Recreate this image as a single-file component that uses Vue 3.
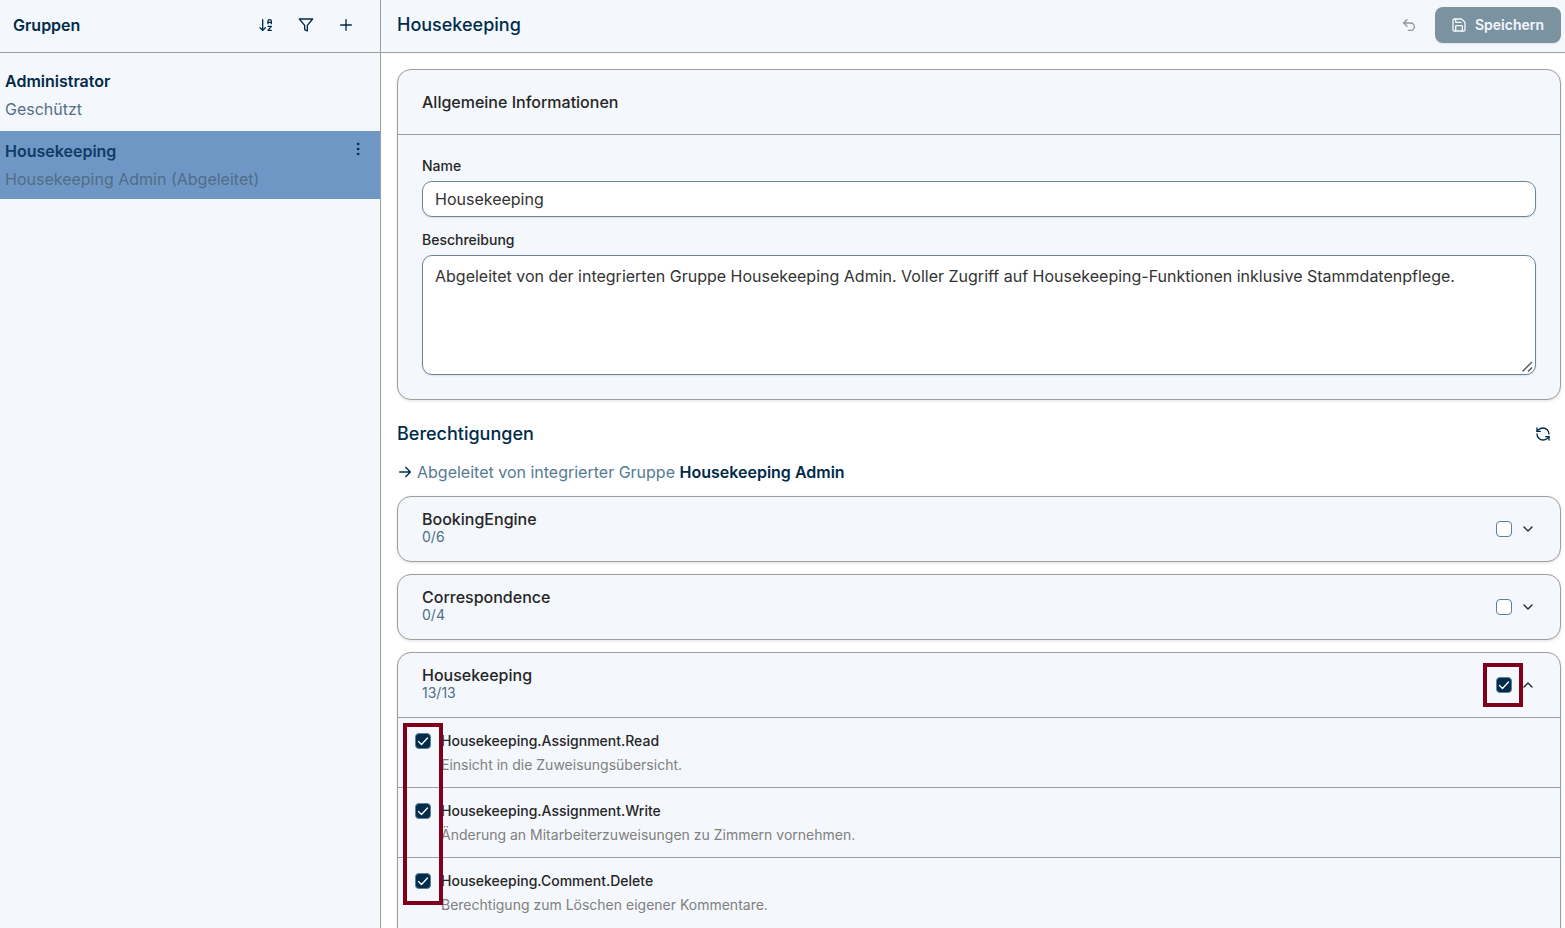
<template>
  <div class="app">
    <aside class="sidebar">
      <header class="sidebar__header">
        <h2 class="sidebar__title">Gruppen</h2>
        <div class="sidebar__tools">
          <button class="icon-btn" type="button" aria-label="Sortieren">
            <svg class="icon" viewBox="0 0 24 24">
              <path d="m3 16 4 4 4-4" />
              <path d="M7 20V4" />
              <path d="M15 10V6.5a2.5 2.5 0 0 1 5 0V10" />
              <path d="M15 8h5" />
              <path d="M15 14h5l-5 6h5" />
            </svg>
          </button>
          <button class="icon-btn" type="button" aria-label="Filtern">
            <svg class="icon" viewBox="0 0 24 24">
              <path d="M22 3H2l8 9.46V19l4 2v-8.54z" />
            </svg>
          </button>
          <button class="icon-btn" type="button" aria-label="Neue Gruppe">
            <svg class="icon" viewBox="0 0 24 24">
              <path d="M4 12h16M12 4v16" />
            </svg>
          </button>
        </div>
      </header>

      <ul class="groups">
        <li
          v-for="group in groups"
          :key="group.name"
          :class="['groups__item', { 'groups__item--active': group.name === selected }]"
          @click="selected = group.name"
        >
          <div class="groups__text">
            <div class="groups__name">{{ group.name }}</div>
            <div class="groups__hint">{{ group.hint }}</div>
          </div>
          <button
            v-if="group.editable"
            class="icon-btn icon-btn--menu"
            type="button"
            aria-label="Aktionen"
          >
            <svg class="icon icon--dots" viewBox="0 0 24 24">
              <circle cx="12" cy="4.5" r="1.5" />
              <circle cx="12" cy="12" r="1.5" />
              <circle cx="12" cy="19.5" r="1.5" />
            </svg>
          </button>
        </li>
      </ul>
    </aside>

    <main class="main">
      <header class="main__header">
        <h1 class="main__title">Housekeeping</h1>
        <div class="main__actions">
          <button class="icon-btn icon-btn--muted" type="button" aria-label="Zurücksetzen" disabled>
            <svg class="icon" viewBox="0 0 24 24">
              <path d="M9 14 4 9l5-5" />
              <path d="M4 9h10.5a5.5 5.5 0 0 1 0 11H11" />
            </svg>
          </button>
          <button class="save-btn" type="button" disabled>
            <svg class="icon" viewBox="0 0 24 24">
              <path d="M15.2 3a2 2 0 0 1 1.4.6l3.8 3.8a2 2 0 0 1 .6 1.4V19a2 2 0 0 1-2 2H5a2 2 0 0 1-2-2V5a2 2 0 0 1 2-2z" />
              <path d="M17 21v-7a1 1 0 0 0-1-1H8a1 1 0 0 0-1 1v7" />
              <path d="M7 3v4a1 1 0 0 0 1 1h7" />
            </svg>
            Speichern
          </button>
        </div>
      </header>

      <div class="content">
        <section class="card">
          <h3 class="card__header card__title">Allgemeine Informationen</h3>
          <div class="form">
            <label class="form__label" for="group-name">Name</label>
            <input id="group-name" v-model="name" class="form__input" type="text" />
            <label class="form__label form__label--next" for="group-description">Beschreibung</label>
            <textarea
              id="group-description"
              v-model="description"
              class="form__input form__input--area"
              spellcheck="false"
            ></textarea>
          </div>
        </section>

        <div class="section-head">
          <h2 class="main__title">Berechtigungen</h2>
          <button class="icon-btn icon-btn--refresh" type="button" aria-label="Aktualisieren">
            <svg class="icon" viewBox="0 0 24 24">
              <path d="M21 12a9 9 0 0 0-9-9 9.75 9.75 0 0 0-6.74 2.74L3 8" />
              <path d="M3 3v5h5" />
              <path d="M3 12a9 9 0 0 0 9 9 9.75 9.75 0 0 0 6.74-2.74L21 16" />
              <path d="M16 16h5v5" />
            </svg>
          </button>
        </div>

        <p class="derived">
          <svg class="icon" viewBox="0 0 24 24">
            <path d="M4 12h16M13 5l7 7-7 7" />
          </svg>
          <span>Abgeleitet von integrierter Gruppe <strong>Housekeeping Admin</strong></span>
        </p>

        <section v-for="module in modules" :key="module.name" class="card card--module">
          <header class="card__header">
            <div class="card__text">
              <h3 class="card__title">{{ module.name }}</h3>
              <div class="card__count">{{ module.granted }}/{{ module.total }}</div>
            </div>
            <div class="card__controls">
              <input
                v-model="module.checked"
                class="check"
                type="checkbox"
                :aria-label="module.name"
              />
              <button
                class="toggle"
                type="button"
                :aria-expanded="module.open"
                :aria-label="module.open ? 'Zuklappen' : 'Aufklappen'"
                @click="module.open = !module.open"
              >
                <svg class="icon" viewBox="0 0 24 24">
                  <path :d="module.open ? 'm6 15 6-6 6 6' : 'm6 9 6 6 6-6'" />
                </svg>
              </button>
            </div>
          </header>

          <ul v-if="module.open" class="rights">
            <li v-for="right in module.rights" :key="right.key" class="rights__item">
              <input :id="right.key" v-model="right.checked" class="check" type="checkbox" />
              <div>
                <label class="rights__name" :for="right.key">{{ right.key }}</label>
                <div class="rights__text">{{ right.text }}</div>
              </div>
            </li>
          </ul>

          <template v-if="module.marked">
            <div class="marker marker--all"></div>
            <div class="marker marker--list"></div>
          </template>
        </section>
      </div>
    </main>
  </div>
</template>

<script setup>
import { ref } from 'vue'

// ── Gruppen ──
const groups = [
  { name: 'Administrator', hint: 'Geschützt', editable: false },
  { name: 'Housekeeping', hint: 'Housekeeping Admin (Abgeleitet)', editable: true },
]
const selected = ref('Housekeeping')

// ── Formular ──
const name = ref('Housekeeping')
const description = ref(
  'Abgeleitet von der integrierten Gruppe Housekeeping Admin. Voller Zugriff auf Housekeeping-Funktionen inklusive Stammdatenpflege.'
)

// ── Berechtigungen ──
const modules = ref([
  { name: 'BookingEngine', granted: 0, total: 6, checked: false, open: false, rights: [] },
  { name: 'Correspondence', granted: 0, total: 4, checked: false, open: false, rights: [] },
  {
    name: 'Housekeeping',
    granted: 13,
    total: 13,
    checked: true,
    open: true,
    marked: true,
    rights: [
      {
        key: 'Housekeeping.Assignment.Read',
        text: 'Einsicht in die Zuweisungsübersicht.',
        checked: true,
      },
      {
        key: 'Housekeeping.Assignment.Write',
        text: 'Änderung an Mitarbeiterzuweisungen zu Zimmern vornehmen.',
        checked: true,
      },
      {
        key: 'Housekeeping.Comment.Delete',
        text: 'Berechtigung zum Löschen eigener Kommentare.',
        checked: true,
      },
    ],
  },
])
</script>

<style>
body {
  margin: 0;
  background: #ffffff;
}
</style>

<style scoped>
* {
  box-sizing: border-box;
}

.app {
  display: grid;
  grid-template-columns: 381px 1fr;
  height: 100vh;
  overflow: hidden;
  font-family: Inter, 'Liberation Sans', sans-serif;
  font-size: 16px;
  color: #002b49;
}

h1,
h2,
h3,
p,
ul {
  margin: 0;
  padding: 0;
  list-style: none;
}

button,
input,
textarea {
  font-family: inherit;
}

/* ── Icons ── */
.icon {
  display: block;
  flex: none;
  width: 16px;
  height: 16px;
  fill: none;
  stroke: currentColor;
  stroke-width: 2;
  stroke-linecap: round;
  stroke-linejoin: round;
}

.icon--dots {
  fill: currentColor;
  stroke-width: 1;
}

.icon-btn {
  display: flex;
  align-items: center;
  justify-content: center;
  width: 32px;
  height: 32px;
  padding: 0;
  border: none;
  background: none;
  color: #002b49;
  cursor: pointer;
}

.icon-btn--muted {
  color: #8f969d;
}

.icon-btn--refresh {
  width: 36px;
}

.icon-btn--menu {
  width: 24px;
  height: 24px;
}

/* ── Seitenleiste ── */
.sidebar {
  border-right: 1px solid #9e9e9e;
  background: #f4f7fc;
}

.sidebar__header {
  display: flex;
  align-items: center;
  justify-content: space-between;
  height: 53px;
  padding: 0 18px 2px 13px;
  border-bottom: 1px solid #9e9e9e;
}

.sidebar__title {
  font-size: 16px;
  font-weight: 600;
  line-height: 24px;
}

.sidebar__tools {
  display: flex;
  gap: 8px;
}

.groups {
  display: flex;
  flex-direction: column;
  gap: 2px;
  padding-top: 8px;
}

.groups__item {
  display: flex;
  justify-content: space-between;
  padding: 6px 10px 6px 5px;
  line-height: 28px;
  cursor: pointer;
}

.groups__item--active {
  background: #6f97c5;
}

.groups__name {
  font-weight: 600;
}

.groups__item--active .groups__name {
  color: #0f3b66;
}

.groups__hint {
  color: #557086;
}

.groups__item--active .groups__hint {
  color: #4f6d87;
}

/* ── Hauptbereich ── */
.main {
  min-width: 0;
}

.main__header {
  display: flex;
  align-items: center;
  justify-content: space-between;
  height: 53px;
  padding: 0 4px 2px 16px;
  border-bottom: 1px solid #9e9e9e;
  background: #f4f7fc;
}

.main__title {
  font-size: 18px;
  font-weight: 500;
  line-height: 30px;
}

.main__actions {
  display: flex;
  align-items: center;
  gap: 10px;
}

.save-btn {
  display: flex;
  align-items: center;
  gap: 8px;
  min-width: 126px;
  height: 36px;
  padding: 0 16px 1px;
  border: none;
  border-radius: 8px;
  background: #7b92a1;
  box-shadow: 0 1px 2px rgba(0, 0, 0, 0.08);
  color: #f4f7fc;
  font-size: 14px;
  font-weight: 600;
}

.content {
  padding: 16px 4px 0 16px;
}

/* ── Karten ── */
.card {
  position: relative;
  border: 1px solid #9e9e9e;
  border-radius: 14px;
  background: #f4f7fc;
  box-shadow: 0 1px 3px rgba(0, 0, 0, 0.12);
  color: #262626;
}

.card--module {
  margin-top: 12px;
}

.card__header {
  display: flex;
  align-items: center;
  justify-content: space-between;
  height: 64px;
  padding: 0 24px;
}

.card__text {
  padding-bottom: 2px;
}

.card__title {
  font-size: 16px;
  font-weight: 500;
  line-height: 18px;
}

.card__count {
  color: #4d7089;
  font-size: 14px;
  line-height: 18px;
}

.card__controls {
  display: flex;
  align-items: center;
  gap: 8px;
}

.toggle {
  padding: 0;
  border: none;
  background: none;
  color: #262626;
  cursor: pointer;
}

/* ── Formular ── */
.form {
  display: flex;
  flex-direction: column;
  padding: 20px 24px 24px;
  border-top: 1px solid #9e9e9e;
}

.form__label {
  margin-bottom: 4px;
  font-size: 14px;
  font-weight: 500;
  line-height: 22px;
}

.form__label--next {
  margin-top: 12px;
}

.form__input {
  height: 36px;
  padding: 0 12px;
  border: 1px solid #6a8599;
  border-radius: 10px;
  outline: none;
  background: #ffffff;
  box-shadow: 0 1px 2px rgba(0, 0, 0, 0.1);
  color: #333333;
  font-size: 16px;
}

.form__input--area {
  height: 120px;
  padding: 8px 12px;
  line-height: 24px;
  resize: vertical;
}

.form__input--area::-webkit-resizer {
  background: url("data:image/svg+xml,%3Csvg xmlns='http://www.w3.org/2000/svg' viewBox='0 0 15 15'%3E%3Cpath d='M2.500 12.500l9.500-9.500M8 12.500l4-4' fill='none' stroke='%23555555' stroke-width='1.400'/%3E%3C/svg%3E") center / 15px no-repeat;
}

/* ── Berechtigungen ── */
.section-head {
  display: flex;
  align-items: center;
  justify-content: space-between;
  height: 36px;
  margin-top: 16px;
}

.derived {
  display: flex;
  align-items: center;
  gap: 4px;
  margin-top: 8px;
  line-height: 24px;
  color: #557a94;
}

.derived .icon,
.derived strong {
  color: #002b49;
}

.derived strong {
  font-weight: 600;
}

.check {
  flex: none;
  width: 16px;
  height: 16px;
  margin: 0;
  border: 1px solid #5f7f96;
  border-radius: 4px;
  appearance: none;
  background: #ffffff;
}

.check:checked {
  background: #002b49 url("data:image/svg+xml,%3Csvg xmlns='http://www.w3.org/2000/svg' viewBox='0 0 14 14'%3E%3Cpath d='M2.500 7.500l3 3 6-6.500' fill='none' stroke='white' stroke-width='1.300' stroke-linecap='round' stroke-linejoin='round'/%3E%3C/svg%3E") center / 14px no-repeat;
}

.rights {
  padding-bottom: 24px;
}

.rights__item {
  display: flex;
  gap: 10px;
  height: 70px;
  padding: 11px 17px 0;
  border-top: 1px solid #9e9e9e;
  font-size: 14px;
  line-height: 24px;
}

.rights__item .check {
  margin-top: 4px;
}

.rights__name {
  font-weight: 500;
}

.rights__text {
  color: #808080;
}

/* ── Markierungen ── */
.marker {
  position: absolute;
  width: 40px;
  border: 4px solid #80001a;
  pointer-events: none;
}

.marker--all {
  top: 10px;
  right: 37px;
  height: 44px;
}

.marker--list {
  top: 70px;
  left: 5px;
  height: 182px;
}
</style>
